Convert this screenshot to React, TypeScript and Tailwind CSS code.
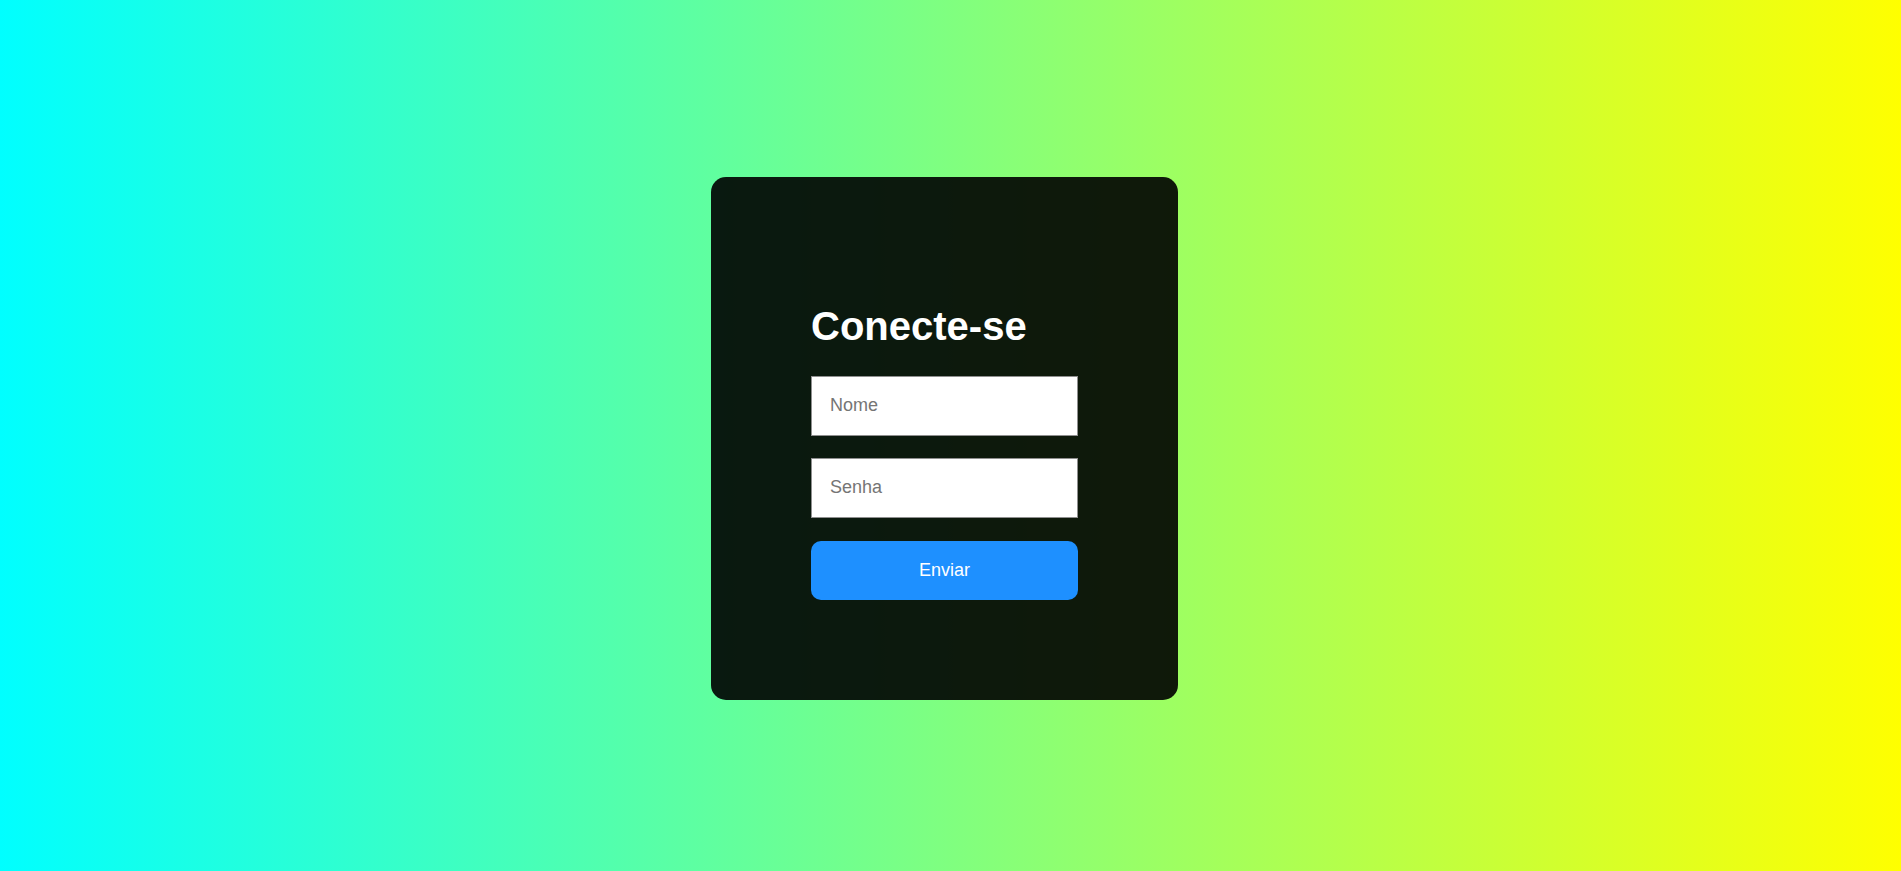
import React from "react";

export default function App() {
  return (
    <div
      className="w-full h-screen flex items-center justify-center pr-[12px] pt-[6px] bg-[linear-gradient(to_right,#00ffff,#ffff00)]"
      style={{ fontFamily: '"Liberation Sans", Arial, sans-serif' }}
    >
      <div className="bg-[rgba(0,0,0,0.9)] rounded-[15px] p-[100px] flex flex-col">
        <h1 className="text-white text-[40px] font-bold leading-[normal] my-[26.8px]">
          Conecte-se
        </h1>
        <input
          autoFocus
          type="text"
          placeholder="Nome"
          className="w-[267px] h-[60px] bg-white border border-[#8f8f8f] pl-[18px] text-[18px] text-black placeholder:text-[#757575] outline-none caret-black"
        />
        <input
          type="password"
          placeholder="Senha"
          className="w-[267px] h-[60px] mt-[22px] bg-white border border-[#8f8f8f] pl-[18px] text-[18px] text-black placeholder:text-[#757575] outline-none"
        />
        <button className="w-[267px] h-[59px] mt-[23px] bg-[#1e90ff] rounded-[10px] text-white text-[18px]">
          Enviar
        </button>
      </div>
    </div>
  );
}
